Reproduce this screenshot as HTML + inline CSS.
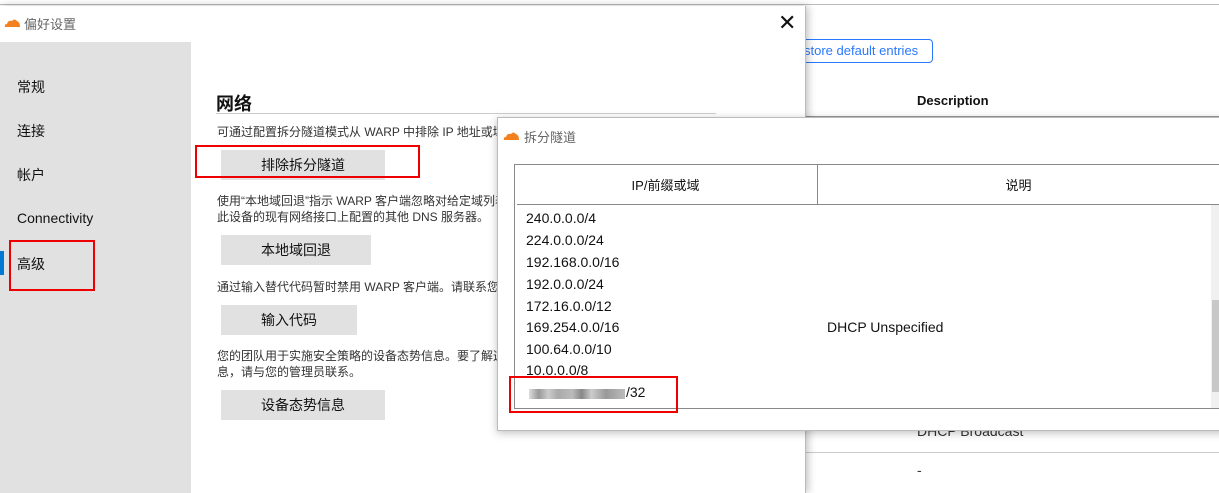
<!DOCTYPE html>
<html><head><meta charset="utf-8"><style>
*{margin:0;padding:0;box-sizing:border-box}
body{width:1219px;height:493px;overflow:hidden;background:#fff;position:relative;font-family:"Liberation Sans","Noto Sans CJK SC",sans-serif;color:#111}
.a{position:absolute;white-space:nowrap}
.btn{position:absolute;background:#e1e1e1;font-size:14px;text-align:center;line-height:30px;height:30px}
.t{font-size:12px;color:#333}
.row{position:absolute;left:526px;font-size:14px}
.red{position:absolute;border:2px solid #e00}
</style></head><body>
<div class="a" style="left:0;top:0;width:1219px;height:5px;border-bottom:1px solid #bbb"></div>
<div class="a" style="left:793px;top:39px;width:140px;height:24px;border:1px solid #2979ff;border-radius:4px;color:#2979ff;font-size:13px;line-height:22px;padding-left:10px">store default entries</div>
<div class="a" style="left:917px;top:93px;font-size:13px;font-weight:bold">Description</div>
<div class="a" style="left:800px;top:116px;width:419px;height:2px;background:#999"></div>
<div class="a" style="left:917px;top:423px;font-size:14px;color:#333">DHCP Broadcast</div>
<div class="a" style="left:806px;top:452px;width:413px;height:1px;background:#ccc"></div>
<div class="a" style="left:917px;top:462px;font-size:14px;color:#333">-</div>
<div class="a" style="left:0;top:6px;width:806px;height:487px;background:#fff;box-shadow:2px 0 8px rgba(0,0,0,.25);border-right:1px solid #bbb">
 <svg class="a" style="left:4px;top:12px" width="16" height="9" viewBox="0 0 16 9"><path d="M1 9 Q0 6 3 6 Q4 2 8 3 Q10 0 13 3 Q16 4 16 9Z" fill="#f48120"/></svg>
 <div class="a" style="left:24px;top:8px;font-size:13px;color:#666">偏好设置</div>
 <div class="a" style="left:778px;top:4px;font-size:22px;color:#111">✕</div>
 <div class="a" style="left:0;top:36px;width:191px;height:451px;background:#e1e1e1"></div>
 <div class="a" style="left:0;top:245px;width:4px;height:24px;background:#0078d4"></div>
 <div class="a" style="left:17px;top:71px;font-size:14px">常规</div>
 <div class="a" style="left:17px;top:115px;font-size:14px">连接</div>
 <div class="a" style="left:17px;top:159px;font-size:14px">帐户</div>
 <div class="a" style="left:17px;top:204px;font-size:14px">Connectivity</div>
 <div class="a" style="left:17px;top:248px;font-size:14px">高级</div>
 <div class="a" style="left:216px;top:84px;font-size:18px;font-weight:bold">网络</div>
 <div class="a" style="left:216px;top:107px;width:500px;height:1px;background:#ccc"></div>
 <div class="a t" style="left:217px;top:117px">可通过配置拆分隧道模式从 WARP 中排除 IP 地址或域</div>
 <div class="btn" style="left:221px;top:144px;width:164px">排除拆分隧道</div>
 <div class="a t" style="left:217px;top:187px;line-height:16px">使用“本地域回退”指示 WARP 客户端忽略对给定域列表<br>此设备的现有网络接口上配置的其他 DNS 服务器。</div>
 <div class="btn" style="left:221px;top:229px;width:150px">本地域回退</div>
 <div class="a t" style="left:217px;top:272px">通过输入替代代码暂时禁用 WARP 客户端。请联系您的</div>
 <div class="btn" style="left:221px;top:299px;width:136px">输入代码</div>
 <div class="a t" style="left:217px;top:342px;line-height:16px">您的团队用于实施安全策略的设备态势信息。要了解这<br>息，请与您的管理员联系。</div>
 <div class="btn" style="left:221px;top:384px;width:164px">设备态势信息</div>
</div>
<div class="red" style="left:9px;top:240px;width:86px;height:51px"></div>
<div class="red" style="left:195px;top:145px;width:225px;height:33px"></div>
<div class="a" style="left:497px;top:117px;width:730px;height:314px;background:#fff;border:1px solid #bbb;box-shadow:0 2px 8px rgba(0,0,0,.25)">
 <svg class="a" style="left:5px;top:13px" width="16" height="9" viewBox="0 0 16 9"><path d="M1 9 Q0 6 3 6 Q4 2 8 3 Q10 0 13 3 Q16 4 16 9Z" fill="#f48120"/></svg>
 <div class="a" style="left:26px;top:9px;font-size:13px;color:#666">拆分隧道</div>
</div>
<div class="a" style="left:514px;top:164px;width:705px;height:245px;border:1px solid #888;border-right:none"></div>
<div class="a" style="left:517px;top:204px;width:702px;height:1px;background:#888"></div>
<div class="a" style="left:817px;top:165px;width:1px;height:39px;background:#888"></div>
<div class="a" style="left:514px;top:175px;width:303px;text-align:center;font-size:13px">IP/前缀或域</div>
<div class="a" style="left:818px;top:175px;width:401px;text-align:center;font-size:13px">说明</div>
<div class="a" style="left:1211px;top:205px;width:8px;height:203px;background:#f0f0f0"></div>
<div class="a" style="left:1212px;top:300px;width:7px;height:92px;background:#c8c8c8"></div>
<div class="row" style="top:210px">240.0.0.0/4</div>
<div class="row" style="top:232px">224.0.0.0/24</div>
<div class="row" style="top:254px">192.168.0.0/16</div>
<div class="row" style="top:276px">192.0.0.0/24</div>
<div class="row" style="top:298px">172.16.0.0/12</div>
<div class="row" style="top:319px">169.254.0.0/16</div>
<div class="row" style="top:341px">100.64.0.0/10</div>
<div class="row" style="top:362px">10.0.0.0/8</div>
<div class="a" style="left:529px;top:389px;width:96px;height:10px;background:linear-gradient(90deg,#ddd,#999 10%,#ccc 20%,#aaa 30%,#bbb 45%,#888 55%,#ccc 65%,#999 80%,#bbb)"></div>
<div class="row" style="left:626px;top:384px">/32</div>
<div class="a" style="left:827px;top:319px;font-size:14px">DHCP Unspecified</div>
<div class="red" style="left:509px;top:376px;width:169px;height:37px"></div>
</body></html>
